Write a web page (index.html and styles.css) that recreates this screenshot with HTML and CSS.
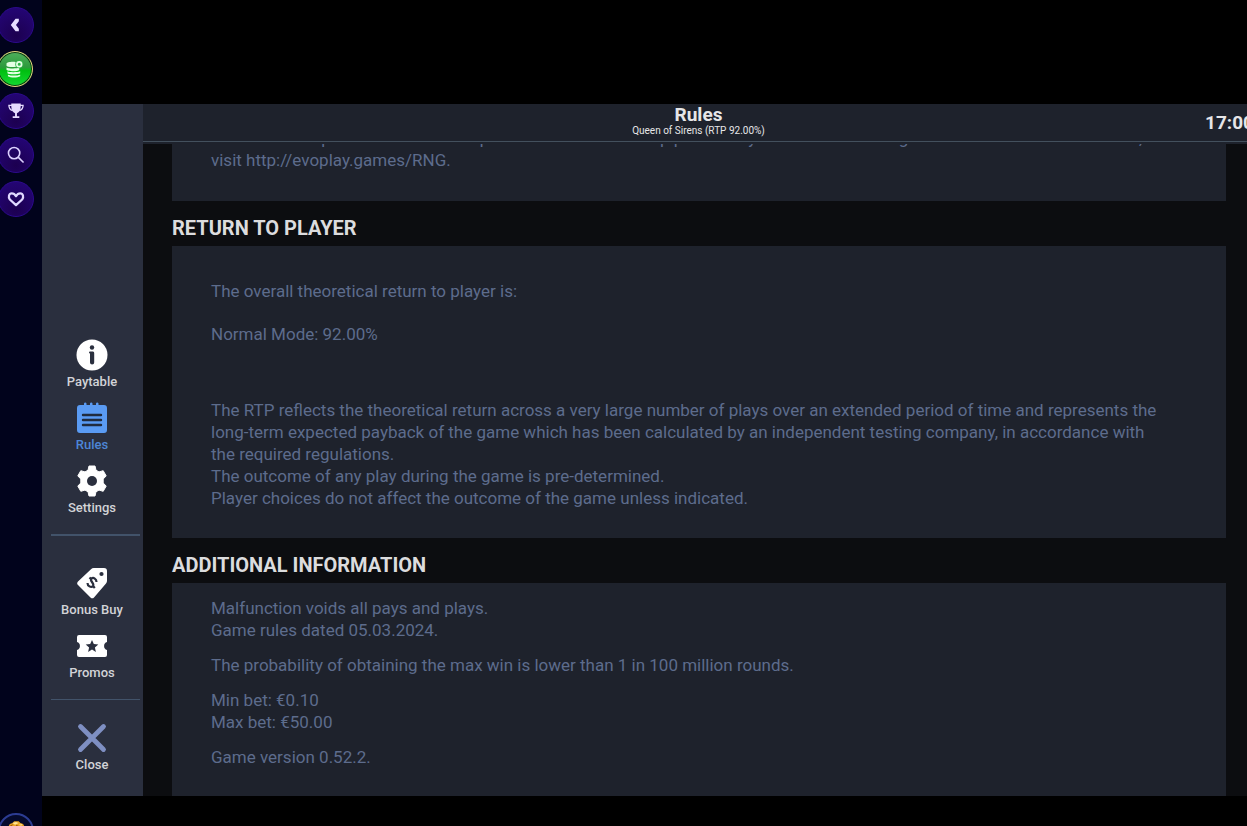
FILE: index.html
```html
<!DOCTYPE html>
<html lang="en">
<head>
  <meta charset="UTF-8">
  <meta name="viewport" content="width=device-width, initial-scale=1.0">
  <title>Queen of Sirens</title>
  <link rel="stylesheet" href="styles.css">
</head>
<body>
  <!-- Casino rail -->
  <nav class="rail">
    <button class="rail-button" aria-label="Back">
      <svg viewBox="0 0 36 36"><path d="M21 11.500h-3.500l-5 6.500 5 6.500H21v-2.500l-3-4 3-4z" fill="#e6dcff"/></svg>
    </button>
    <button class="rail-button green" aria-label="Cashier">
      <svg viewBox="0 0 36 36" fill="#e4ffe4">
        <path d="M9 12.500c0-2.500 12-3 12 0v2c0 2-12 2-12 0z"/>
        <path d="M9 16.300c2 1.500 10 1.500 13.500.5v2.200c-2 2-13.500 1.500-13.500-.5z"/>
        <path d="M10 20.400c2 1.300 10 1.300 13.500 0v2.200c-3 1.500-12 1.300-13.500 0z"/>
        <path d="M10.500 24c3 1.200 10 1.200 13 0v1.600c-3 1.900-10 1.900-13 0z"/>
        <circle cx="22.500" cy="13" r="4.200" fill="#2fb448"/>
        <circle cx="22.500" cy="13" r="2.500" fill="none" stroke="#e4ffe4" stroke-width="1.800"/>
      </svg>
    </button>
    <button class="rail-button" aria-label="Tournaments">
      <svg viewBox="0 0 36 36" fill="#e6dcff">
        <path d="M13 10h10v3c0 4-1.500 6.500-4 7.500v3h2.500v2h-7v-2h2.500v-3c-2.500-1-4-3.500-4-7.500z"/>
        <path d="M14 12h-3.500c0 3 1.500 5 4 5.500M22 12h3.500c0 3-1.500 5-4 5.500" fill="none" stroke="#e6dcff" stroke-width="1.400"/>
      </svg>
    </button>
    <button class="rail-button" aria-label="Search">
      <svg viewBox="0 0 36 36" fill="none" stroke="#dcd0ff" stroke-width="1.700"><circle cx="16" cy="16" r="6"/><path d="M20.500 20.500l5.500 5.500"/></svg>
    </button>
    <button class="rail-button" aria-label="Favourites">
      <svg viewBox="0 0 36 36" fill="none" stroke="#e0d8ff" stroke-width="2.400" stroke-linejoin="round"><path d="M18 24.500l-6.500-6c-2-2.500-1-6.500 2-6.500 2 0 3.500 1.200 4.500 3 1-1.800 2.500-3 4.500-3 3 0 4 4 2 6.500z"/></svg>
    </button>
    <button class="rail-button gold" aria-label="Rewards">
      <svg viewBox="0 0 36 36"><path d="M9 14l2-4 3-1 2-2h5l2 2 3 1 2 4v14H9z" fill="#e9a526"/><path d="M14 9l4-1 3 1-4 2zM21 11l4-1-1 2z" fill="#ffe798"/><path d="M11 12l4-2-2 3zM18 11l3 1-3 1z" fill="#a65c0c"/></svg>
    </button>
  </nav>

  <div class="game">
    <!-- Game menu -->
    <nav class="menu">
      <div class="menu-group pages">
        <button class="menu-item">
          <svg viewBox="0 0 32 32"><circle cx="16" cy="16" r="15.500" fill="#fff"/><circle cx="16" cy="8.500" r="2.200" fill="#2a2f3e"/><path d="M14 12.500h3a1.500 1.500 0 0 1 1.200 1.500v9.500a2 2 0 0 1-4.200 0V14.500a1 1 0 0 1 0-2z" fill="#2a2f3e"/></svg>
          <span>Paytable</span>
        </button>
        <button class="menu-item active">
          <svg viewBox="0 0 32 32"><path d="M4 3h4V1.500a1.300 1.300 0 0 1 2.500 0V3h3.500V1.500a1.300 1.300 0 0 1 2.500 0V3H20V1.500a1.300 1.300 0 0 1 2.500 0V3H28a3 3 0 0 1 3 3v22a3 3 0 0 1-3 3H4a3 3 0 0 1-3-3V6a3 3 0 0 1 3-3z" fill="#5a9bf3"/><path d="M7 13h18M7 18h18M7 23h18" stroke="#202b3e" stroke-width="2.400" stroke-linecap="round"/></svg>
          <span>Rules</span>
        </button>
        <button class="menu-item">
          <svg viewBox="0 0 32 32"><path d="M13 1h6l1 4.200 3 1.700 4.200-1.200 3 5.200-3 3.100v4l3 3.100-3 5.200-4.200-1.200-3 1.700-1 4.200h-6l-1-4.200-3-1.700-4.200 1.200-3-5.200 3-3.100v-4l-3-3.100 3-5.200L9 6.900l3-1.700z" fill="#fff" stroke="#fff" stroke-linejoin="round"/><circle cx="16" cy="16" r="5" fill="#2a2f3e"/></svg>
          <span>Settings</span>
        </button>
      </div>
      <div class="menu-group">
        <button class="menu-item">
          <svg viewBox="0 0 32 32"><path d="M18 1h10a3 3 0 0 1 3 3v10a4 4 0 0 1-1 2.500L18 30.500a2.500 2.500 0 0 1-3.500 0L2 18a2.500 2.500 0 0 1 0-3.500L15 2.200A4 4 0 0 1 18 1z" fill="#fff"/><circle cx="25.500" cy="7" r="2.100" fill="#2a2f3e"/><path d="M20.500 15c0-3-3-5-5-3.500-2.500 2.300 3.500 5 1.500 7.500-2 2-5.500 0-5.500-3M13.500 10.500l1.800 1.800M17 19l1.800 2" fill="none" stroke="#2a2f3e" stroke-width="2.200"/></svg>
          <span>Bonus Buy</span>
        </button>
        <button class="menu-item">
          <svg viewBox="0 0 32 32"><path d="M3 5h26a2 2 0 0 1 2 2v5a4.200 4.200 0 0 0 0 8v5a2 2 0 0 1-2 2H3a2 2 0 0 1-2-2v-5a4.200 4.200 0 0 0 0-8V7a2 2 0 0 1 2-2z" fill="#fff"/><path d="M16 10l1.800 4.100 4.500.4-3.400 3 1 4.400-3.900-2.300-3.900 2.300 1-4.400-3.400-3 4.500-.4z" fill="#2a2f3e"/></svg>
          <span>Promos</span>
        </button>
      </div>
      <div class="menu-group">
        <button class="menu-item">
          <svg viewBox="0 0 32 32"><path d="M4.500 4.500l23 23M27.500 4.500l-23 23" stroke="#7e8fc2" stroke-width="4.800" stroke-linecap="round"/></svg>
          <span>Close</span>
        </button>
      </div>
    </nav>

    <main class="rules">
      <header class="rules-header">
        <div class="heading">
          <h1>Rules</h1>
          <p>Queen of Sirens (RTP 92.00%)</p>
        </div>
        <time class="clock">17:00</time>
      </header>

      <div class="rules-content">
        <section class="panel">
          <p>The reels are spun with a fair and equal chance for each stop position by a random number generator. For more information, visit http://evoplay.games/RNG.</p>
        </section>

        <h2>RETURN TO PLAYER</h2>
        <section class="panel rtp">
          <p>The overall theoretical return to player is:</p>
          <p>Normal Mode: 92.00%</p>
          <p class="note">The RTP reflects the theoretical return across a very large number of plays over an extended period of time and represents the long-term expected payback of the game which has been calculated by an independent testing company, in accordance with the required regulations.<br>
          The outcome of any play during the game is pre-determined.<br>
          Player choices do not affect the outcome of the game unless indicated.</p>
        </section>

        <h2>ADDITIONAL INFORMATION</h2>
        <section class="panel info">
          <p>Malfunction voids all pays and plays.<br>Game rules dated 05.03.2024.</p>
          <p>The probability of obtaining the max win is lower than 1 in 100 million rounds.</p>
          <p>Min bet: €0.10<br>Max bet: €50.00</p>
          <p>Game version 0.52.2.</p>
        </section>
      </div>
    </main>
  </div>
</body>
</html>
```
FILE: styles.css
```css
* {
  margin: 0;
  padding: 0;
  box-sizing: border-box;
}

body {
  display: flex;
  height: 100vh;
  overflow: hidden;
  background: #000;
  font-family: Roboto, Arial, sans-serif;
}

button {
  border: none;
  background: none;
  font: inherit;
  cursor: pointer;
}

/* Casino rail */
.rail {
  display: flex;
  flex-direction: column;
  flex: none;
  gap: 8px;
  width: 42px;
  padding-top: 7px;
  overflow: hidden;
  background: #01031c;
}

.rail-button {
  flex: none;
  width: 36px;
  height: 36px;
  margin-left: -2px;
  border: 1px solid #2c0a8c;
  border-radius: 50%;
  background: radial-gradient(circle at 50% 80%, #1c0050, #25067a);
}

.rail-button svg {
  display: block;
  width: 34px;
  height: 34px;
}

.rail-button.green {
  border: 1px solid #e3d27c;
  background: linear-gradient(#4fae5c, #2c9a3c 45%, #00bf10 55%, #14d832);
  box-shadow: inset 0 0 0 1px #0d3b12;
  margin-left: -3px;
  margin-bottom: -2px;
}

.rail-button.gold {
  margin-top: auto;
  margin-bottom: -23px;
  border: 2px solid #2c3c92;
  background: #050a2c;
}

.rail-button.gold svg {
  width: 32px;
  height: 32px;
}

/* Game frame */
.game {
  display: flex;
  flex: 1;
  min-width: 0;
  margin: 104px 0 30px;
  overflow: hidden;
  background: #0c0d10;
}

.menu {
  display: flex;
  flex-direction: column;
  justify-content: flex-end;
  flex: none;
  width: 101px;
  padding: 0 3px 23px 9px;
  background: #2a2f3e;
}

.menu-group {
  display: flex;
  flex-direction: column;
  gap: 12px;
  padding-bottom: 18px;
  border-bottom: 1px solid #42536a;
}

.menu-group.pages {
  border-bottom-width: 2px;
}

.menu-group + .menu-group {
  padding-top: 31px;
}

.menu-group:last-child {
  padding-top: 22px;
  padding-bottom: 0;
  border-bottom: none;
}

.menu-item {
  display: flex;
  flex-direction: column;
  align-items: center;
  gap: 3px;
  padding-right: 7px;
  color: #d2d3d7;
  font-size: 13px;
  font-weight: 500;
  line-height: 16px;
}

.menu-item svg {
  width: 32px;
  height: 32px;
}

.menu-item.active {
  color: #4d86d6;
}

/* Rules page, runs a little past the window edge */
.rules {
  display: flex;
  flex-direction: column;
  flex: 1;
  min-width: 0;
  margin-right: -7px;
}

.rules-header {
  display: grid;
  grid-template-columns: 1fr auto 1fr;
  flex: none;
  height: 38px;
  border-bottom: 1px solid #43505d;
  background: #1e222c;
  box-shadow: 0 2px #1e222c;
  color: #e6e6e8;
  z-index: 1;
}

.heading {
  grid-column: 2;
  padding-top: 1px;
  text-align: center;
}

.heading h1 {
  font-size: 19px;
  line-height: 20px;
}

.heading p {
  font-size: 10px;
  line-height: 12px;
}

.clock {
  justify-self: end;
  font-size: 19px;
  font-weight: 700;
  line-height: 38px;
}

.rules-content {
  flex: 1;
  min-height: 0;
  margin-top: -15px;
  padding: 0 28px 0 29px;
}

.rules-content h2 {
  padding: 16px 0 7px;
  color: #dcdcde;
  font-size: 20px;
  line-height: 22px;
}

.panel {
  padding: 0 60px 30px 39px;
  background: #1e222c;
  color: #5d6c8c;
  font-size: 17px;
  line-height: 22px;
}

.panel.rtp {
  padding-top: 34px;
  padding-bottom: 29px;
}

.rtp p + p {
  margin-top: 21px;
}

.rtp p.note {
  margin-top: 54px;
}

.panel.info {
  padding-top: 14px;
  padding-bottom: 36px;
}

.info p + p {
  margin-top: 13px;
}
```
